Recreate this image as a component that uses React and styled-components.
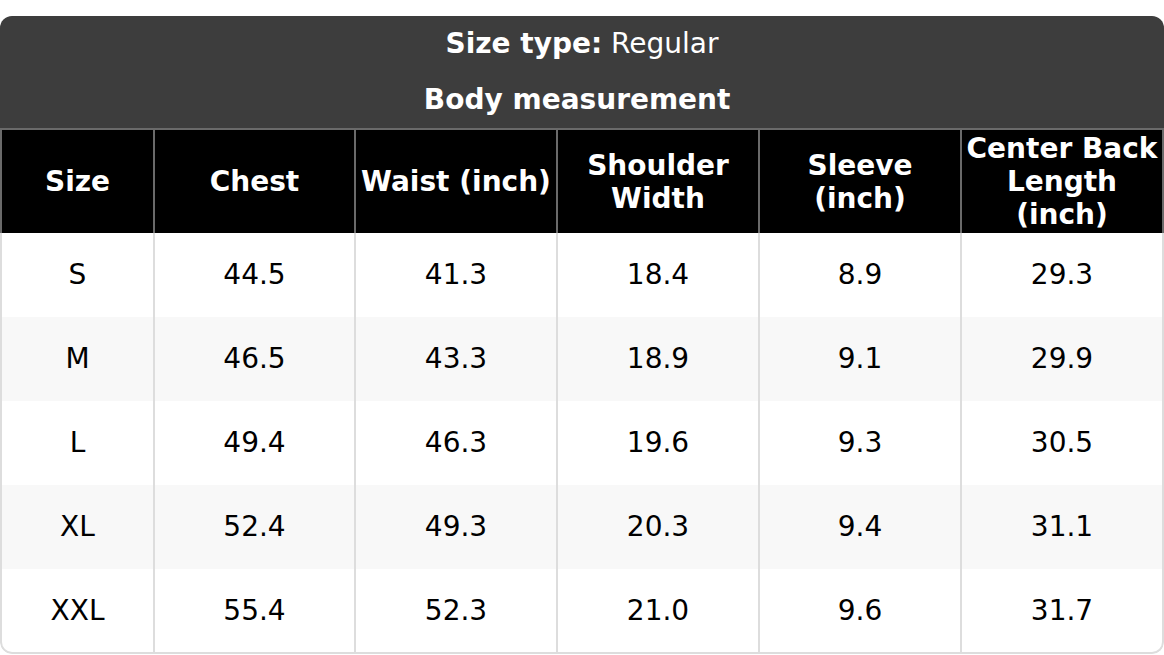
import React from 'react';
import styled, { createGlobalStyle } from 'styled-components';

const GlobalStyle = createGlobalStyle`
  body {
    margin: 0;
    background: #ffffff;
    font-family: "DejaVu Sans", Verdana, sans-serif;
  }
`;

const Page = styled.div`
  padding-top: 16px;
`;

const Card = styled.div`
  width: 1164px;
  border-radius: 12px;
  overflow: hidden;
  background: #ffffff;
`;

const TitleBlock = styled.div`
  background-color: #3d3d3d;
  color: #ffffff;
  text-align: center;
`;

const TitleLine = styled.div`
  font-size: 28px;
  line-height: 33px;
  padding: 11px 0 12px;
  font-weight: ${props => (props.bold ? 700 : 400)};
`;

const Strong = styled.span`
  font-weight: 700;
`;

const Table = styled.table`
  width: 1164px;
  table-layout: fixed;
  border-collapse: separate;
  border-spacing: 0;
  font-size: 28px;
  line-height: 33px;
`;

const HeadCell = styled.th`
  box-sizing: border-box;
  width: ${props => props.w}px;
  background-color: #000000;
  color: #ffffff;
  font-weight: 700;
  white-space: nowrap;
  text-align: center;
  vertical-align: middle;
  padding: 2px 0;
  border-top: 2px solid #6a6a6a;
  border-right: 2px solid #6a6a6a;

  &:first-child {
    border-left: 2px solid #6a6a6a;
  }
`;

const Row = styled.tr`
  background-color: ${props => (props.striped ? '#f8f8f8' : '#ffffff')};
`;

const Cell = styled.td`
  color: #000000;
  text-align: center;
  vertical-align: middle;
  padding: 25px 0 26px;
  border-right: 2px solid #dddddd;

  &:first-child {
    border-left: 2px solid #dddddd;
  }

  ${Row}:last-child & {
    border-bottom: 2px solid #dddddd;
    padding-bottom: 25px;
  }
  ${Row}:last-child &:first-child {
    border-bottom-left-radius: 12px;
  }
  ${Row}:last-child &:last-child {
    border-bottom-right-radius: 12px;
  }
`;

const columns = [
  { label: ['Size'], width: 155 },
  { label: ['Chest'], width: 201 },
  { label: ['Waist (inch)'], width: 202 },
  { label: ['Shoulder', 'Width'], width: 202 },
  { label: ['Sleeve', '(inch)'], width: 202 },
  { label: ['Center Back', 'Length', '(inch)'], width: 202 },
];

const rows = [
  ['S', '44.5', '41.3', '18.4', '8.9', '29.3'],
  ['M', '46.5', '43.3', '18.9', '9.1', '29.9'],
  ['L', '49.4', '46.3', '19.6', '9.3', '30.5'],
  ['XL', '52.4', '49.3', '20.3', '9.4', '31.1'],
  ['XXL', '55.4', '52.3', '21.0', '9.6', '31.7'],
];

const App = () => {
  return (
    <Page>
      <GlobalStyle />
      <Card>
        <TitleBlock>
          <TitleLine>
            <Strong>Size type:</Strong> Regular
          </TitleLine>
          <TitleLine bold>Body measurement&nbsp;</TitleLine>
        </TitleBlock>
        <Table>
          <thead>
            <tr>
              {columns.map(col => (
                <HeadCell key={col.label.join(' ')} w={col.width}>
                  {col.label.map((line, i) => (
                    <React.Fragment key={line}>
                      {i > 0 && <br />}
                      {line}
                    </React.Fragment>
                  ))}
                </HeadCell>
              ))}
            </tr>
          </thead>
          <tbody>
            {rows.map((row, i) => (
              <Row key={row[0]} striped={i % 2 === 1}>
                {row.map((value, j) => (
                  <Cell key={j}>{value}</Cell>
                ))}
              </Row>
            ))}
          </tbody>
        </Table>
      </Card>
    </Page>
  );
};

export default App;
